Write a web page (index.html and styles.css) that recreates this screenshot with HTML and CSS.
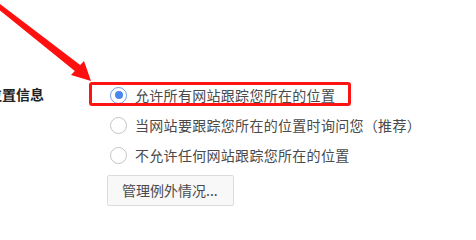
FILE: index.html
```html
<!DOCTYPE html>
<html>
<head>
<meta charset="utf-8">
<link rel="stylesheet" href="styles.css">
</head>
<body>
<div class="page">
  <div class="section">
    <div class="label">位置信息</div>
    <div class="options">
      <div class="option">
        <span class="radio checked"></span>
        <span class="text">允许所有网站跟踪您所在的位置</span>
      </div>
      <div class="option">
        <span class="radio"></span>
        <span class="text">当网站要跟踪您所在的位置时询问您（推荐）</span>
      </div>
      <div class="option">
        <span class="radio"></span>
        <span class="text">不允许任何网站跟踪您所在的位置</span>
      </div>
      <div class="btn">管理例外情况...</div>
    </div>
  </div>
  <div class="highlight"></div>
  <svg class="arrow" width="120" height="100" viewBox="0 0 120 100">
    <polygon points="0,4 80.2,65.1 84,61 91,81 71,75 74.8,70.9 0,10.5" fill="#ff1010"/>
  </svg>
</div>
</body>
</html>
```
FILE: styles.css
```css
html, body {
  margin: 0;
  padding: 0;
  background: #ffffff;
}
.page {
  position: relative;
  width: 476px;
  height: 215px;
  overflow: hidden;
  font-family: "Noto Sans CJK SC", "Noto Sans", sans-serif;
  font-size: 14px;
}
.section {
  display: flex;
  padding-top: 80px;
}
.label {
  width: 122px;
  margin-left: -12px;
  height: 30px;
  line-height: 28px;
  color: #222;
  font-weight: 600;
  font-size: 14px;
}
.options {
  display: flex;
  flex-direction: column;
}
.option {
  display: flex;
  align-items: center;
  height: 30px;
  gap: 8px;
  color: #4a4a4a;
  letter-spacing: 0.3px;
}
.text {
  line-height: 20px;
}
.radio {
  box-sizing: border-box;
  width: 17px;
  height: 17px;
  border: 1px solid #c4c4c4;
  border-radius: 50%;
  display: flex;
  align-items: center;
  justify-content: center;
}
.radio.checked {
  border-color: #6f9de8;
}
.radio.checked::after {
  content: "";
  width: 8px;
  height: 8px;
  border-radius: 50%;
  background: #4a86f0;
}
.btn {
  box-sizing: border-box;
  margin-top: 5px;
  margin-left: -3px;
  width: 127px;
  height: 31px;
  border: 1px solid #dcdcdc;
  border-radius: 2px;
  background: #f8f8f8;
  color: #4a4a4a;
  font-size: 14px;
  line-height: 29px;
  padding-left: 14px;
}
.highlight {
  position: absolute;
  left: 89px;
  top: 82px;
  width: 262px;
  height: 24px;
  box-sizing: border-box;
  border: 3px solid #ff1414;
  border-radius: 3px;
}
.arrow {
  position: absolute;
  left: 0;
  top: 0;
  overflow: visible;
}
```
